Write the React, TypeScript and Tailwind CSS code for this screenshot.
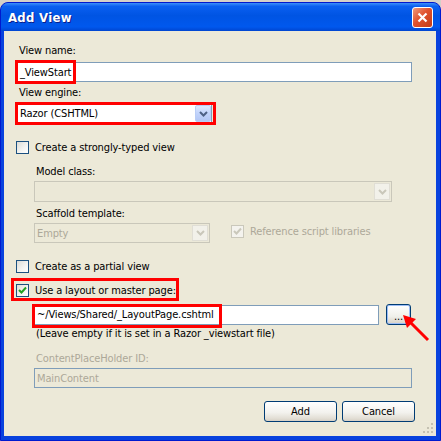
import React from "react";

function Checkbox({ checked = false, disabled = false }: { checked?: boolean; disabled?: boolean }) {
  return (
    <div
      className={
        disabled
          ? "w-[13px] h-[13px] border border-[#cac8bb] bg-[#f4f3ee] flex items-center justify-center shrink-0"
          : "w-[13px] h-[13px] border border-[#1c5180] bg-[linear-gradient(135deg,#dcdcd7_0%,#f5f5f2_60%,#ffffff_100%)] flex items-center justify-center shrink-0"
      }
    >
      {checked && (
        <svg width="9" height="9" viewBox="0 0 9 9">
          <path d="M1 4 L3.5 6.5 L8 1.5" fill="none" stroke={disabled ? "#cac8bb" : "#21a121"} strokeWidth="2" />
        </svg>
      )}
    </div>
  );
}

function ArrowBtn({ disabled = false }: { disabled?: boolean }) {
  return (
    <div
      className={
        disabled
          ? "w-[16px] h-full border border-[#e0ded5] bg-[#f2f1ea] flex items-center justify-center shrink-0"
          : "w-[16px] h-full border border-[#b9cdf6] rounded-[2px] bg-[linear-gradient(to_bottom,#dde8fe_0%,#c1d3fb_50%,#b2c6f4_100%)] flex items-center justify-center shrink-0"
      }
    >
      <svg width="9" height="6" viewBox="0 0 9 6">
        <path d="M1 1 L4.5 4.5 L8 1" fill="none" stroke={disabled ? "#c9c7ba" : "#4d6185"} strokeWidth="2" />
      </svg>
    </div>
  );
}

export default function App() {
  return (
    <div className="w-[441px] h-[441px] bg-[#d4d0c8] pt-[2px] relative overflow-hidden font-['DejaVu_Sans_Condensed','DejaVu_Sans',sans-serif] text-[11px] leading-[13px] tracking-[-0.12px] text-black">
      <div className="h-[439px] flex flex-col rounded-t-[8px] bg-[#0842de] border border-[#0019cf]">
        {/* Title bar */}
        <div className="h-[28px] shrink-0 flex items-center justify-between pl-[7px] pr-[7px] rounded-t-[7px] bg-[linear-gradient(to_bottom,#3c8ff9_0%,#0a5ff0_12%,#0054e3_45%,#0058ee_85%,#0045d0_100%)]">
          <span className="text-white font-bold text-[13px] tracking-[0.3px] [text-shadow:1px_1px_0_#0a1e8c] font-['DejaVu_Sans_Condensed','DejaVu_Sans',sans-serif]">
            Add View
          </span>
          <div className="w-[21px] h-[21px] rounded-[3px] border border-white bg-[linear-gradient(135deg,#f09a7c_0%,#e0522e_45%,#c33b16_100%)] flex items-center justify-center">
            <svg width="11" height="11" viewBox="0 0 11 11">
              <path d="M1.5 1.5 L9.5 9.5 M9.5 1.5 L1.5 9.5" stroke="white" strokeWidth="2.2" />
            </svg>
          </div>
        </div>

        {/* Content */}
        <div className="flex-1 ml-[3px] mr-[4px] mb-[4px] bg-[#ece9d8] relative flex flex-col pl-[13px] pt-[13px]">
          <div className="ml-[2px]">View name:</div>
          <div className="relative mt-[5px] w-[395px] h-[20px] border border-[#7f9db9] bg-white flex items-center pl-[2px]">
            <span>_ViewStart</span>
            <div className="absolute left-[-3px] top-[-3px] w-[61px] h-[24px] border-[3px] border-[#ff0000]" />
          </div>

          <div className="ml-[2px] mt-[4px]">View engine:</div>
          <div className="relative mt-[5px] w-[195px] h-[19px] border border-[#7f9db9] bg-white flex items-center pl-[2px]">
            <span className="flex-1">Razor (CSHTML)</span>
            <div className="h-[17px]">
              <ArrowBtn />
            </div>
            <div className="absolute left-[-3px] top-[-3px] w-[201px] h-[23px] border-[3px] border-[#ff0000]" />
          </div>

          <div className="flex items-center mt-[18px] ml-[-1px] gap-[6px]">
            <Checkbox />
            <span>Create a strongly-typed view</span>
          </div>

          <div className="ml-[19px] mt-[11px]">Model class:</div>
          <div className="ml-[17px] mt-[3px] w-[358px] h-[21px] border border-[#c9c7ba] bg-[#ece9d8] flex items-stretch p-[1px]">
            <div className="flex-1 bg-[#ebe8d7]" />
            <ArrowBtn disabled />
          </div>

          <div className="ml-[19px] mt-[5px]">Scaffold template:</div>
          <div className="flex items-start mt-[3px]">
            <div className="ml-[17px] w-[176px] h-[20px] border border-[#c9c7ba] bg-[#ece9d8] flex items-stretch p-[1px]">
              <div className="flex-1 flex items-center pl-[1px] text-[#aca899]">Empty</div>
              <ArrowBtn disabled />
            </div>
            <div className="flex items-center ml-[21px] mt-[2px] gap-[6px] text-[#aca899]">
              <Checkbox checked disabled />
              <span>Reference script libraries</span>
            </div>
          </div>

          <div className="flex items-center mt-[17px] ml-[-1px] gap-[6px]">
            <Checkbox />
            <span>Create as a partial view</span>
          </div>

          <div className="relative flex items-center mt-[11px] ml-[-1px] gap-[6px] w-max">
            <Checkbox checked />
            <span>Use a layout or master page:</span>
            <div className="absolute left-[-5px] top-[-6px] w-[168px] h-[23px] border-[3px] border-[#ff0000]" />
          </div>

          <div className="flex items-center ml-[17px] mt-[7px] gap-[7px]">
            <div className="relative w-[345px] h-[20px] border border-[#7f9db9] bg-white flex items-center pl-[2px]">
              <span>~/Views/Shared/_LayoutPage.cshtml</span>
              <div className="absolute left-[-3px] top-[-2px] w-[190px] h-[24px] border-[3px] border-[#ff0000]" />
            </div>
            <div className="w-[25px] h-[21px] rounded-[3px] border border-[#003c74] bg-[linear-gradient(to_bottom,#ffffff_0%,#f0f0ea_60%,#d6d0c5_100%)] shadow-[inset_0_0_0_1px_#9cbcf5] flex items-end justify-center pb-[3px] leading-[8px]">
              ...
            </div>
          </div>

          <div className="ml-[19px] mt-[2px]">(Leave empty if it is set in a Razor _viewstart file)</div>

          <div className="ml-[19px] mt-[12px] text-[#aca899]">ContentPlaceHolder ID:</div>
          <div className="ml-[17px] mt-[3px] w-[378px] h-[20px] border border-[#7f9db9] bg-[#ece9d8] flex items-center pl-[2px] text-[#aca899]">
            MainContent
          </div>

          <div className="flex justify-end gap-[5px] mt-[13px] mr-[21px]">
            <div className="w-[73px] h-[21px] rounded-[3px] border border-[#003c74] bg-[linear-gradient(to_bottom,#ffffff_0%,#f3f2ee_55%,#e3dfd6_85%,#d6d0c5_100%)] flex items-center justify-center">
              Add
            </div>
            <div className="w-[73px] h-[21px] rounded-[3px] border border-[#003c74] bg-[linear-gradient(to_bottom,#ffffff_0%,#f3f2ee_55%,#e3dfd6_85%,#d6d0c5_100%)] flex items-center justify-center">
              Cancel
            </div>
          </div>

          {/* size grip */}
          <svg className="absolute right-[2px] bottom-[2px]" width="11" height="11" viewBox="0 0 11 11">
            <g fill="#c5c2b2">
              <rect x="8" y="0" width="2" height="2" />
              <rect x="4" y="4" width="2" height="2" />
              <rect x="8" y="4" width="2" height="2" />
              <rect x="0" y="8" width="2" height="2" />
              <rect x="4" y="8" width="2" height="2" />
              <rect x="8" y="8" width="2" height="2" />
            </g>
          </svg>
        </div>
      </div>

      {/* red arrow annotation */}
      <svg className="absolute left-0 top-0 pointer-events-none" width="441" height="441" viewBox="0 0 441 441">
        <line x1="428" y1="340" x2="410" y2="322" stroke="#ff0000" strokeWidth="3" />
        <path d="M403 315 L416 319 L407 328 Z" fill="#ff0000" />
      </svg>
    </div>
  );
}
